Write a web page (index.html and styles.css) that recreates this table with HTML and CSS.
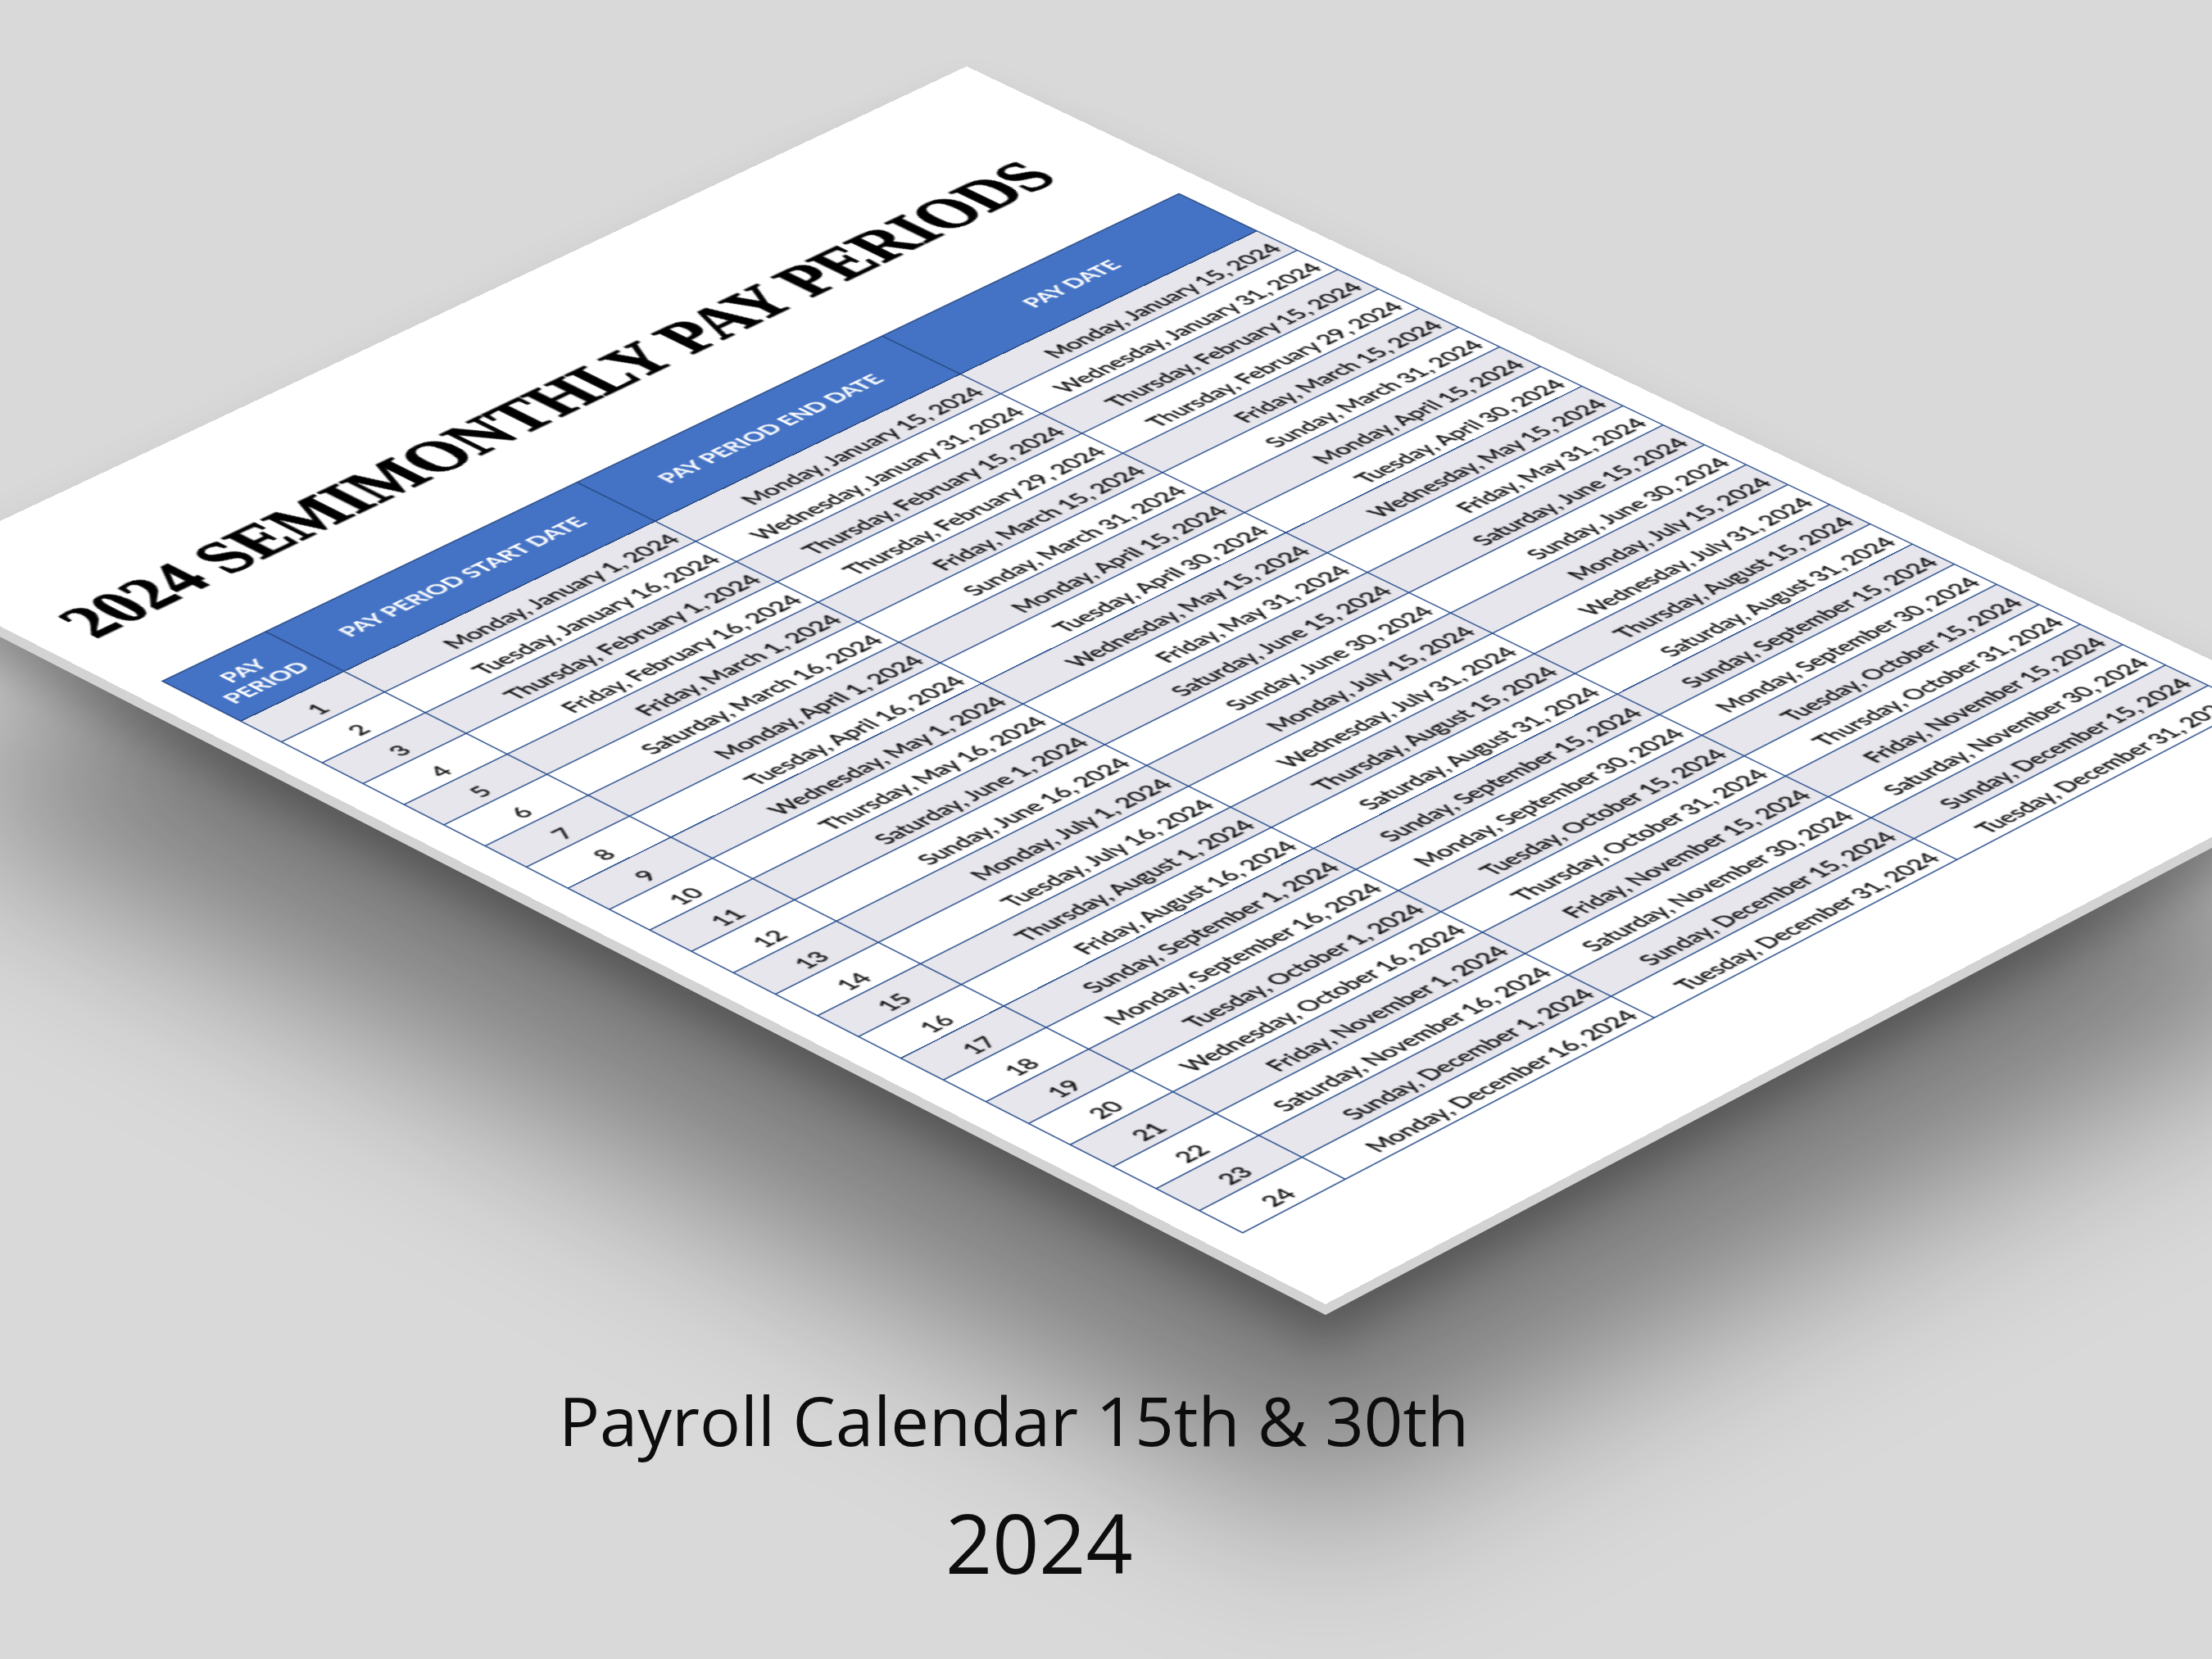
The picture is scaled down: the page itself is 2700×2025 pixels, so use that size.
FILE: index.html
```html
<!DOCTYPE html>
<html lang="en">
<head>
<meta charset="utf-8">
<title>Payroll Calendar 15th &amp; 30th 2024</title>
<link rel="stylesheet" href="styles.css">
</head>
<body>
<main class="scene">
  <div class="stage">
    <div class="shadow-wrap far"><div class="sheet-shape shadow-far"></div></div>
    <div class="shadow-wrap near"><div class="sheet-shape shadow-near"></div></div>
    <div class="sheet-shape edge"></div>
    <article class="paper">
      <h1 class="title">2024 SEMIMONTHLY PAY PERIODS</h1>
      <table class="periods">
        <colgroup><col class="c-num"><col class="c-date"><col class="c-date"><col class="c-date"></colgroup>
        <thead>
          <tr><th>PAY<br>PERIOD</th><th>PAY PERIOD START DATE</th><th>PAY PERIOD END DATE</th><th>PAY DATE</th></tr>
        </thead>
        <tbody>
          <tr><td>1</td><td>Monday, January 1, 2024</td><td>Monday, January 15, 2024</td><td>Monday, January 15, 2024</td></tr>
          <tr><td>2</td><td>Tuesday, January 16, 2024</td><td>Wednesday, January 31, 2024</td><td>Wednesday, January 31, 2024</td></tr>
          <tr><td>3</td><td>Thursday, February 1, 2024</td><td>Thursday, February 15, 2024</td><td>Thursday, February 15, 2024</td></tr>
          <tr><td>4</td><td>Friday, February 16, 2024</td><td>Thursday, February 29, 2024</td><td>Thursday, February 29, 2024</td></tr>
          <tr><td>5</td><td>Friday, March 1, 2024</td><td>Friday, March 15, 2024</td><td>Friday, March 15, 2024</td></tr>
          <tr><td>6</td><td>Saturday, March 16, 2024</td><td>Sunday, March 31, 2024</td><td>Sunday, March 31, 2024</td></tr>
          <tr><td>7</td><td>Monday, April 1, 2024</td><td>Monday, April 15, 2024</td><td>Monday, April 15, 2024</td></tr>
          <tr><td>8</td><td>Tuesday, April 16, 2024</td><td>Tuesday, April 30, 2024</td><td>Tuesday, April 30, 2024</td></tr>
          <tr><td>9</td><td>Wednesday, May 1, 2024</td><td>Wednesday, May 15, 2024</td><td>Wednesday, May 15, 2024</td></tr>
          <tr><td>10</td><td>Thursday, May 16, 2024</td><td>Friday, May 31, 2024</td><td>Friday, May 31, 2024</td></tr>
          <tr><td>11</td><td>Saturday, June 1, 2024</td><td>Saturday, June 15, 2024</td><td>Saturday, June 15, 2024</td></tr>
          <tr><td>12</td><td>Sunday, June 16, 2024</td><td>Sunday, June 30, 2024</td><td>Sunday, June 30, 2024</td></tr>
          <tr><td>13</td><td>Monday, July 1, 2024</td><td>Monday, July 15, 2024</td><td>Monday, July 15, 2024</td></tr>
          <tr><td>14</td><td>Tuesday, July 16, 2024</td><td>Wednesday, July 31, 2024</td><td>Wednesday, July 31, 2024</td></tr>
          <tr><td>15</td><td>Thursday, August 1, 2024</td><td>Thursday, August 15, 2024</td><td>Thursday, August 15, 2024</td></tr>
          <tr><td>16</td><td>Friday, August 16, 2024</td><td>Saturday, August 31, 2024</td><td>Saturday, August 31, 2024</td></tr>
          <tr><td>17</td><td>Sunday, September 1, 2024</td><td>Sunday, September 15, 2024</td><td>Sunday, September 15, 2024</td></tr>
          <tr><td>18</td><td>Monday, September 16, 2024</td><td>Monday, September 30, 2024</td><td>Monday, September 30, 2024</td></tr>
          <tr><td>19</td><td>Tuesday, October 1, 2024</td><td>Tuesday, October 15, 2024</td><td>Tuesday, October 15, 2024</td></tr>
          <tr><td>20</td><td>Wednesday, October 16, 2024</td><td>Thursday, October 31, 2024</td><td>Thursday, October 31, 2024</td></tr>
          <tr><td>21</td><td>Friday, November 1, 2024</td><td>Friday, November 15, 2024</td><td>Friday, November 15, 2024</td></tr>
          <tr><td>22</td><td>Saturday, November 16, 2024</td><td>Saturday, November 30, 2024</td><td>Saturday, November 30, 2024</td></tr>
          <tr><td>23</td><td>Sunday, December 1, 2024</td><td>Sunday, December 15, 2024</td><td>Sunday, December 15, 2024</td></tr>
          <tr><td>24</td><td>Monday, December 16, 2024</td><td>Tuesday, December 31, 2024</td><td>Tuesday, December 31, 2024</td></tr>
        </tbody>
      </table>
    </article>
  </div>
  <section class="caption">
    <p class="caption-line">Payroll Calendar 15th &amp; 30th</p>
    <p class="caption-year">2024</p>
  </section>
</main>
</body>
</html>
```
FILE: styles.css
```css
html, body {
  margin: 0;
  padding: 0;
  overflow: hidden;
  background: #d9d9d9;
}

.scene {
  width: 2700px;
  height: 2025px;
  overflow: hidden;
  display: flex;
  flex-direction: column;
  background: #d9d9d9;
}

.stage {
  position: relative;
  flex: none;
  height: 1683px;
}

/* all sheet layers share the same corner-pinned plane */
.sheet-shape,
.paper {
  position: absolute;
  left: 0;
  top: 0;
  width: 850px;
  height: 1100px;
  box-sizing: border-box;
  transform-origin: 0 0;
}

.shadow-wrap {
  position: absolute;
  left: 0;
  top: 0;
  width: 2700px;
  height: 2025px;
}

.shadow-wrap.far { filter: blur(110px); }
.shadow-wrap.near { filter: blur(28px); }

.shadow-far {
  background: rgba(0, 0, 0, 0.44);
  transform: translateY(250px) matrix3d(1.60095, -0.72119, 0, 0.000050121, 1.52123, 0.74593, 0, -0.000042222, 0, 0, 1, 0, -130.570, 697.448, 0, 1);
}

.shadow-near {
  background: rgba(0, 0, 0, 0.3);
  transform: translateY(45px) matrix3d(1.60095, -0.72119, 0, 0.000050121, 1.52123, 0.74593, 0, -0.000042222, 0, 0, 1, 0, -130.570, 697.448, 0, 1);
}

.edge {
  background: #d3d3d3;
  transform: translateY(13px) matrix3d(1.60095, -0.72119, 0, 0.000050121, 1.52123, 0.74593, 0, -0.000042222, 0, 0, 1, 0, -130.570, 697.448, 0, 1);
}

.paper {
  background: #ffffff;
  padding: 95px 23px 0 21.4px;
  transform: matrix3d(1.60095, -0.72119, 0, 0.000050121, 1.52123, 0.74593, 0, -0.000042222, 0, 0, 1, 0, -130.570, 697.448, 0, 1);
}

.title {
  margin: 0 0 52px 6px;
  height: 45px;
  font-family: "Liberation Serif", "DejaVu Serif", serif;
  font-weight: 700;
  font-size: 45.6px;
  line-height: 45px;
  color: #000000;
  -webkit-text-stroke: 0.8px #000000;
  white-space: nowrap;
  transform: scaleY(1.1);
  transform-origin: 0 84%;
}

.periods {
  width: 806px;
  table-layout: fixed;
  border-collapse: collapse;
  font-family: Lato, "Open Sans", sans-serif;
  color: #111111;
}

.c-num { width: 78.7px; }
.c-date { width: 242.4px; }

.periods th {
  height: 62.4px;
  padding: 0 4px;
  background: #4472c4;
  color: #ffffff;
  font-weight: 700;
  font-size: 15.8px;
  line-height: 1.15;
  text-align: center;
  vertical-align: middle;
  border: 1px solid #25467f;
  box-sizing: border-box;
}

.periods td {
  height: 31.8px;
  padding: 0 5px 3px;
  font-size: 16px;
  line-height: 19px;
  text-align: right;
  vertical-align: bottom;
  border: 1.2px solid #244a8a;
  box-sizing: border-box;
  white-space: nowrap;
  -webkit-text-stroke: 0.3px #111111;
}

.periods td:first-child {
  text-align: center;
}

.periods tbody tr:nth-child(odd) td {
  background: #e6e6ec;
}

.caption {
  position: relative;
  z-index: 1;
  display: flex;
  flex-direction: column;
  align-items: flex-start;
  padding-left: 682px;
  font-family: "Open Sans", "Noto Sans", sans-serif;
  font-weight: 400;
  color: #0d0d0d;
}

.caption-line {
  margin: 0;
  font-size: 83.2px;
  line-height: 99px;
  white-space: nowrap;
}

.caption-year {
  margin: 41px 0 0 472px;
  font-size: 100px;
  line-height: 118px;
}
```
